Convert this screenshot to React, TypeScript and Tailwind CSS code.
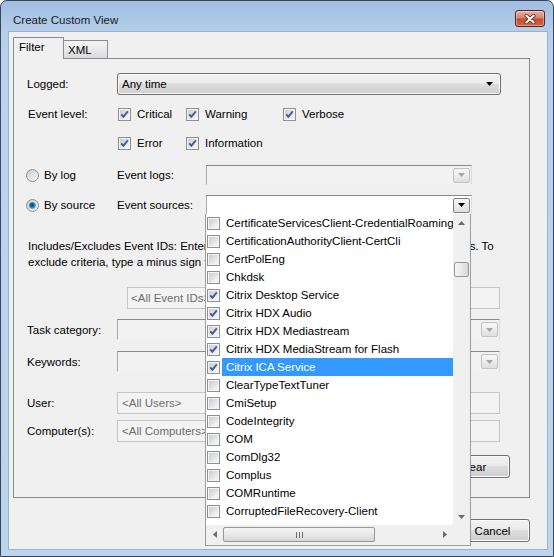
import React, { useId } from "react";

type Item = { name: string; checked: boolean; selected?: boolean };

const sources: Item[] = [
    { name: "CertificateServicesClient-CredentialRoamingTasks", checked: false },
    { name: "CertificationAuthorityClient-CertCli", checked: false },
    { name: "CertPolEng", checked: false },
    { name: "Chkdsk", checked: false },
    { name: "Citrix Desktop Service", checked: true },
    { name: "Citrix HDX Audio", checked: true },
    { name: "Citrix HDX Mediastream", checked: true },
    { name: "Citrix HDX MediaStream for Flash", checked: true },
    { name: "Citrix ICA Service", checked: true, selected: true },
    { name: "ClearTypeTextTuner", checked: false },
    { name: "CmiSetup", checked: false },
    { name: "CodeIntegrity", checked: false },
    { name: "COM", checked: false },
    { name: "ComDlg32", checked: false },
    { name: "Complus", checked: false },
    { name: "COMRuntime", checked: false },
    { name: "CorruptedFileRecovery-Client", checked: false },
];

const useSvgId = () => useId().replace(/[^a-zA-Z0-9]/g, "");

const CheckBox = ({ checked }: { checked: boolean }) => {
    const id = useSvgId();
    return (
        <svg width="13" height="13" viewBox="0 0 13 13" className="shrink-0">
            <defs>
                <linearGradient id={id} x1="0" y1="0" x2="1" y2="1">
                    <stop offset="0" stopColor="#c9cdd3" />
                    <stop offset="1" stopColor="#f8f8f8" />
                </linearGradient>
            </defs>
            <rect x="0.5" y="0.5" width="12" height="12" fill="#f5f5f5" stroke="#8e8f8f" />
            <rect x="2" y="2" width="9" height="9" fill={`url(#${id})`} />
            {checked && (
                <path d="M3.2 6.3 L5.4 8.7 L9.8 3.4" fill="none" stroke="#4a5d92" strokeWidth="1.9" />
            )}
        </svg>
    );
};

const Radio = ({ checked }: { checked: boolean }) => {
    const id = useSvgId();
    return (
        <svg width="13" height="13" viewBox="0 0 13 13" className="shrink-0">
            <defs>
                <linearGradient id={id + "a"} x1="0" y1="0" x2="1" y2="1">
                    <stop offset="0" stopColor="#c4c8ce" />
                    <stop offset="1" stopColor="#fbfbfb" />
                </linearGradient>
                <radialGradient id={id + "b"} cx="0.45" cy="0.45" r="0.6">
                    <stop offset="0" stopColor="#0f2d4a" />
                    <stop offset="0.45" stopColor="#1f6fa8" />
                    <stop offset="1" stopColor="#7fd3f7" />
                </radialGradient>
            </defs>
            <circle cx="6.5" cy="6.5" r="6" fill={`url(#${id}a)`} stroke="#8e8f8f" />
            {checked && <circle cx="6.5" cy="6.5" r="3.6" fill={`url(#${id}b)`} />}
        </svg>
    );
};

const DownArrow = ({ color }: { color: string }) => (
    <svg width="7" height="4" viewBox="0 0 7 4" className="shrink-0">
        <path d="M0 0 H7 L3.5 4 Z" fill={color} />
    </svg>
);

const ArrowBox = ({ enabled }: { enabled: boolean }) => (
    <div
        className={
            "flex h-[15px] w-[17px] items-center justify-center rounded-[2px] border bg-[linear-gradient(180deg,#f7f7f7_0%,#ececec_50%,#dedede_100%)] " +
            (enabled ? "border-[#7d7d7d]" : "border-[#c2c2c2]")
        }
    >
        <DownArrow color={enabled ? "#000000" : "#a6a6a6"} />
    </div>
);

const EditCombo = ({ className, enabled }: { className: string; enabled: boolean }) => (
    <div
        className={
            "flex h-[20px] items-center justify-end border border-t-[#8a8a8a] border-l-[#a9a9a9] border-r-[#dcdcdc] border-b-[#f2f2f2] pr-px " +
            (enabled ? "bg-white " : "bg-[#f2f2f2] ") +
            className
        }
    >
        <ArrowBox enabled={enabled} />
    </div>
);

const TextBox = ({ text, className }: { text: string; className: string }) => (
    <div
        className={
            "flex h-[22px] items-center overflow-hidden whitespace-nowrap border border-[#c6c6c6] bg-[#f3f3f3] text-[#6d6d6d] " +
            className
        }
    >
        {text}
    </div>
);

const Button = ({ label }: { label: string }) => (
    <div className="flex h-[23px] w-[75px] items-center justify-center rounded-[3px] border border-[#707070] bg-[linear-gradient(180deg,#f2f2f2_0%,#ebebeb_45%,#dddddd_50%,#cfcfcf_100%)] shadow-[inset_0_0_0_1px_#fbfbfb]">
        {label}
    </div>
);

const Label = ({ text }: { text: string }) => (
    <div className="w-[90px] shrink-0">{text}</div>
);

const Level = ({ label, className }: { label: string; className: string }) => (
    <div className={"flex items-center gap-[6px] " + className}>
        <CheckBox checked />
        <span>{label}</span>
    </div>
);

const SourceList = () => (
    <div className="absolute left-[205px] top-[214px] flex h-[332px] w-[266px] flex-col border border-t-0 border-[#9d9d9d] bg-[#f0f0f0]">
        <div className="flex h-[311px]">
            <div className="w-[247px] overflow-hidden bg-white">
                {sources.map(s => (
                    <div key={s.name} className="flex h-[18px] items-center whitespace-nowrap pl-px">
                        <CheckBox checked={s.checked} />
                        <div
                            className={
                                "ml-[2px] flex h-[18px] flex-1 items-center pl-[4px] " +
                                (s.selected ? "bg-[#3399ff] text-white" : "")
                            }
                        >
                            {s.name}
                        </div>
                    </div>
                ))}
            </div>
            <div className="flex w-[17px] flex-col bg-[#f0f0f0]">
                <div className="flex h-[17px] items-center justify-center">
                    <svg width="7" height="4" viewBox="0 0 7 4">
                        <path d="M0 4 L3.5 0 L7 4 Z" fill="#6a6a6a" />
                    </svg>
                </div>
                <div className="flex-1">
                    <div className="mx-px mt-[31px] h-[15px] rounded-[2px] border border-[#979797] bg-[linear-gradient(90deg,#f4f4f4_0%,#e9e9e9_50%,#d6d6d6_100%)]" />
                </div>
                <div className="flex h-[17px] items-center justify-center">
                    <DownArrow color="#6a6a6a" />
                </div>
            </div>
        </div>
        <div className="flex h-[19px]">
            <div className="flex w-[247px] items-center">
                <div className="flex h-[17px] w-[17px] items-center justify-center">
                    <svg width="4" height="7" viewBox="0 0 4 7">
                        <path d="M4 0 L0 3.5 L4 7 Z" fill="#6a6a6a" />
                    </svg>
                </div>
                <div className="flex h-[15px] w-[152px] items-center justify-center gap-[2px] rounded-[2px] border border-[#979797] bg-[linear-gradient(180deg,#f4f4f4_0%,#e9e9e9_50%,#d6d6d6_100%)]">
                    <div className="h-[6px] w-px bg-[#6f6f6f]" />
                    <div className="h-[6px] w-px bg-[#6f6f6f]" />
                    <div className="h-[6px] w-px bg-[#6f6f6f]" />
                </div>
                <div className="flex-1" />
                <div className="flex h-[17px] w-[17px] items-center justify-center">
                    <svg width="4" height="7" viewBox="0 0 4 7">
                        <path d="M0 0 L4 3.5 L0 7 Z" fill="#6a6a6a" />
                    </svg>
                </div>
            </div>
            <div className="w-[17px] bg-[#f0f0f0]" />
        </div>
    </div>
);

const App = () => {
    return (
        <div className="relative h-[557px] w-[554px] overflow-hidden font-['Liberation_Sans',Arial,sans-serif] text-[11.5px] leading-[14px] text-black">
            <div className="flex h-full w-full flex-col rounded-t-[7px] border border-[#3a4656] bg-[linear-gradient(180deg,#a0bde0_0px,#b4cdea_28px,#bad2ed_60px,#bcd4ee_100%)] pb-[6px] pl-[7px] pr-[5px]">
                <div className="flex h-[30px] shrink-0 justify-between">
                    <div className="ml-[5px] mt-[12px] text-[#1a1a1a]">Create Custom View</div>
                    <div className="mr-[3px] mt-[9px] flex h-[17px] w-[30px] items-center justify-center rounded-[3px] border border-[#56261e] bg-[linear-gradient(180deg,#eab0a3_0%,#d88370_45%,#c44b33_55%,#d8663f_100%)] shadow-[inset_0_0_0_1px_rgba(255,255,255,0.35)]">
                        <svg width="12" height="10" viewBox="0 0 12 10">
                            <path d="M2.2 1.6 L9.8 8.4 M9.8 1.6 L2.2 8.4" stroke="#6b2a1e" strokeWidth="3.6" strokeLinecap="round" />
                            <path d="M2.2 1.6 L9.8 8.4 M9.8 1.6 L2.2 8.4" stroke="#ffffff" strokeWidth="2" strokeLinecap="round" />
                        </svg>
                    </div>
                </div>

                <div className="flex flex-1 flex-col border border-[#9cb2cb] bg-[#f0f0f0] pl-[4px] pr-[17px] pt-[5px]">
                    <div className="flex h-[22px] items-end">
                        <div className="relative z-10 h-[22px] w-[51px] border border-b-0 border-[#898c95] bg-[#f0f0f0] pl-[5px] pt-[2px]">
                            Filter
                        </div>
                        <div className="h-[19px] w-[44px] border border-b-0 border-l-0 border-[#898c95] bg-[linear-gradient(180deg,#f4f4f4_0%,#e9e9e9_50%,#d8d8d8_100%)] pl-[4px] pt-[2px]">
                            XML
                        </div>
                    </div>

                    <div className="-mt-px flex h-[440px] w-[517px] flex-col border border-[#898c95] bg-[#f0f0f0]">
                        <div className="mt-[14px] flex h-[22px] items-center pl-[13px]">
                            <Label text="Logged:" />
                            <div className="flex h-[22px] w-[384px] items-center justify-between rounded-[3px] border border-[#707070] bg-[linear-gradient(180deg,#f2f2f2_0%,#ebebeb_45%,#dddddd_50%,#cfcfcf_100%)] pl-[4px] pr-[7px] shadow-[inset_0_0_0_1px_#fbfbfb]">
                                <span>Any time</span>
                                <DownArrow color="#000000" />
                            </div>
                        </div>

                        <div className="mt-[9px] flex h-[20px] items-center pl-[14px]">
                            <div className="w-[90px] shrink-0">Event level:</div>
                            <Level label="Critical" className="w-[68px]" />
                            <Level label="Warning" className="w-[97px]" />
                            <Level label="Verbose" className="" />
                        </div>
                        <div className="mt-[9px] flex h-[20px] items-center pl-[104px]">
                            <Level label="Error" className="w-[68px]" />
                            <Level label="Information" className="" />
                        </div>

                        <div className="mt-[12px] flex h-[20px] items-center pl-[12px]">
                            <div className="flex w-[91px] items-center gap-[5px]">
                                <Radio checked={false} />
                                <span>By log</span>
                            </div>
                            <div className="w-[89px] shrink-0">Event logs:</div>
                            <EditCombo className="w-[266px]" enabled={false} />
                        </div>
                        <div className="mt-[10px] flex h-[20px] items-center pl-[12px]">
                            <div className="flex w-[91px] items-center gap-[5px]">
                                <Radio checked />
                                <span>By source</span>
                            </div>
                            <div className="w-[89px] shrink-0">Event sources:</div>
                            <EditCombo className="w-[266px]" enabled />
                        </div>

                        <div className="mt-[23px] whitespace-nowrap pl-[14px] leading-[16px]">
                            <div>Includes/Excludes Event IDs: Enter ID numbers and/or ID ranges separated by commas. To</div>
                            <div>exclude criteria, type a minus sign first. For example 1,3,5-99,-76</div>
                        </div>

                        <div className="mt-[17px] flex h-[22px] pl-[113px]">
                            <TextBox text="<All Event IDs>" className="w-[373px] pl-[3px]" />
                        </div>

                        <div className="mt-[10px] flex h-[21px] items-center pl-[13px]">
                            <Label text="Task category:" />
                            <EditCombo className="h-[21px] w-[383px]" enabled={false} />
                        </div>
                        <div className="mt-[11px] flex h-[21px] items-center pl-[13px]">
                            <Label text="Keywords:" />
                            <EditCombo className="h-[21px] w-[383px]" enabled={false} />
                        </div>

                        <div className="mt-[20px] flex h-[22px] items-center pl-[13px]">
                            <Label text="User:" />
                            <TextBox text="<All Users>" className="w-[383px] pl-[4px]" />
                        </div>
                        <div className="mt-[6px] flex h-[22px] items-center pl-[13px]">
                            <Label text="Computer(s):" />
                            <TextBox text="<All Computers>" className="w-[383px] pl-[4px]" />
                        </div>

                        <div className="mt-[13px] flex justify-end pr-[19px]">
                            <Button label="Clear" />
                        </div>
                    </div>

                    <div className="mt-[21px] flex justify-end gap-[6px]">
                        <Button label="OK" />
                        <Button label="Cancel" />
                    </div>
                </div>
            </div>

            <SourceList />
        </div>
    );
};

export default App;
